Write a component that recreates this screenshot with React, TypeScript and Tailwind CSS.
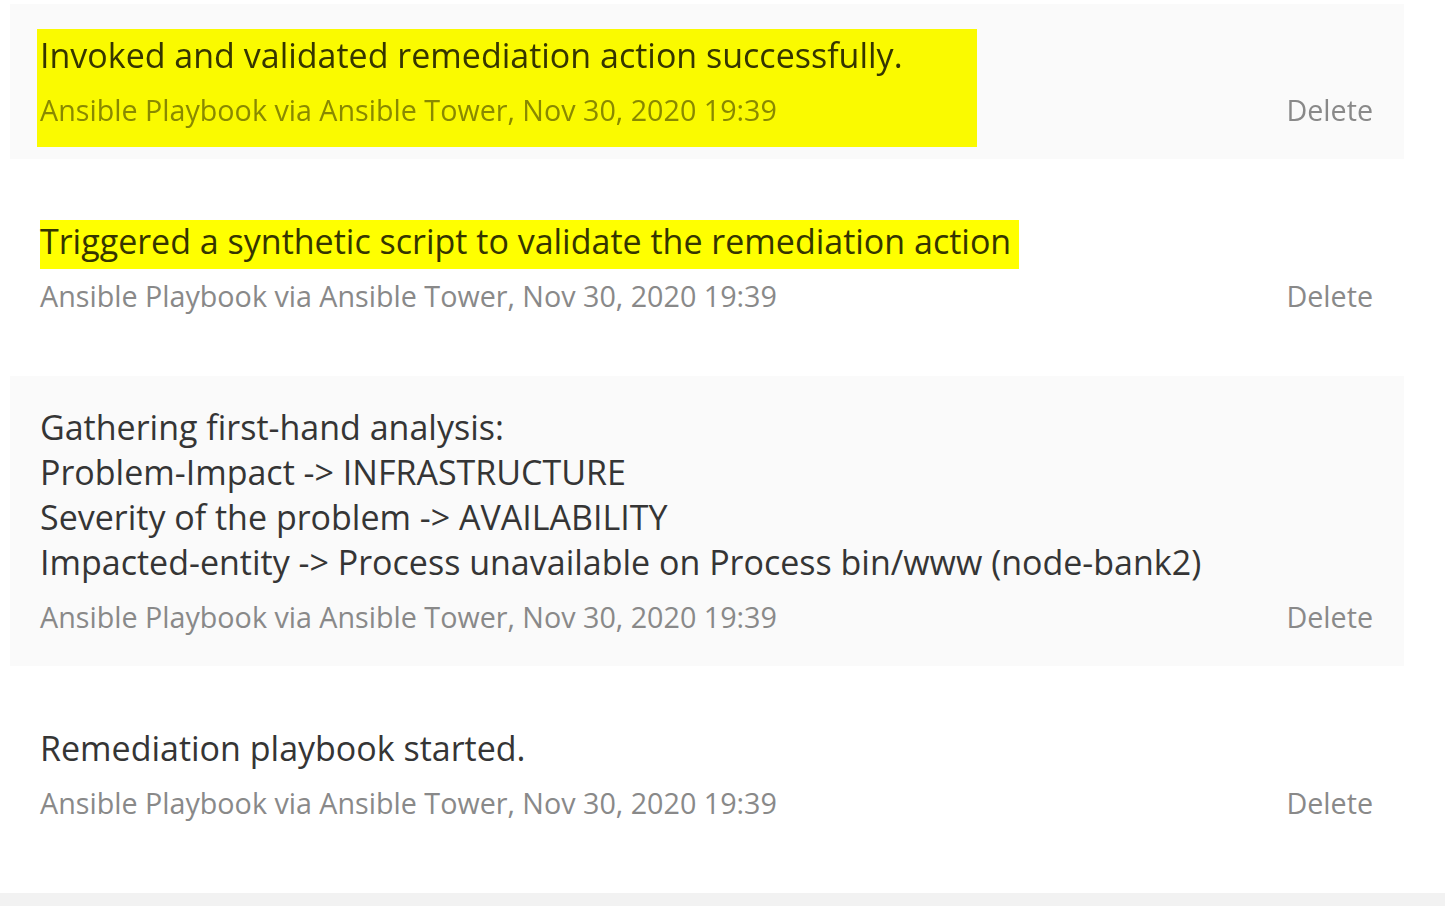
import React from 'react';

type Comment = {
    lines: string[];
    source: string;
    highlight?: 'block' | 'title';
};

const comments: Comment[] = [
    {
        lines: ["Invoked and validated remediation action successfully."],
        source: "Ansible Playbook via Ansible Tower, Nov 30, 2020 19:39",
        highlight: 'block',
    },
    {
        lines: ["Triggered a synthetic script to validate the remediation action"],
        source: "Ansible Playbook via Ansible Tower, Nov 30, 2020 19:39",
        highlight: 'title',
    },
    {
        lines: [
            "Gathering first-hand analysis:",
            "Problem-Impact -> INFRASTRUCTURE",
            "Severity of the problem -> AVAILABILITY",
            "Impacted-entity -> Process unavailable on Process bin/www (node-bank2)",
        ],
        source: "Ansible Playbook via Ansible Tower, Nov 30, 2020 19:39",
    },
    {
        lines: ["Remediation playbook started."],
        source: "Ansible Playbook via Ansible Tower, Nov 30, 2020 19:39",
    },
];

const CommentCard = ({ comment, index }: { comment: Comment; index: number }) => {
    return (
        <div className={`relative flex items-end justify-between pl-[30px] pr-[31px] pt-[29px] pb-[29px] ${index % 2 === 0 ? 'bg-[#fafafa]' : 'bg-white'}`}>
            <div className="flex flex-col">
                <div className="text-[34px] leading-[45px] text-[#353535]">
                    {comment.lines.map((line, i) => (
                        <div key={i} className="whitespace-pre">{line}</div>
                    ))}
                </div>
                <div className="mt-[12px] text-[28.7px] leading-[40px] text-[#898989] whitespace-pre">
                    {comment.source}
                </div>
            </div>
            <button className="text-[28.7px] leading-[40px] text-[#898989] cursor-pointer">Delete</button>

            {/* highlighter marks */}
            {comment.highlight === 'block' && (
                <div className="absolute left-[27px] top-[25px] w-[940px] h-[118px] bg-[#ffff00] mix-blend-multiply pointer-events-none" />
            )}
            {comment.highlight === 'title' && (
                <div className="absolute left-[30px] top-[30px] w-[979px] h-[49px] bg-[#ffff00] mix-blend-multiply pointer-events-none" />
            )}
        </div>
    );
};

export default function App() {
    return (
        <div className="min-h-screen bg-white flex flex-col" style={{ fontFamily: '"Open Sans", "Noto Sans", sans-serif' }}>
            <div className="pl-[10px] pt-[4px] pb-[41px] w-[1404px] flex flex-col gap-[31px]">
                {comments.map((c, i) => (
                    <CommentCard key={i} comment={c} index={i} />
                ))}
            </div>
            <div className="h-[13px] bg-[#f2f2f2]" />
        </div>
    );
}
